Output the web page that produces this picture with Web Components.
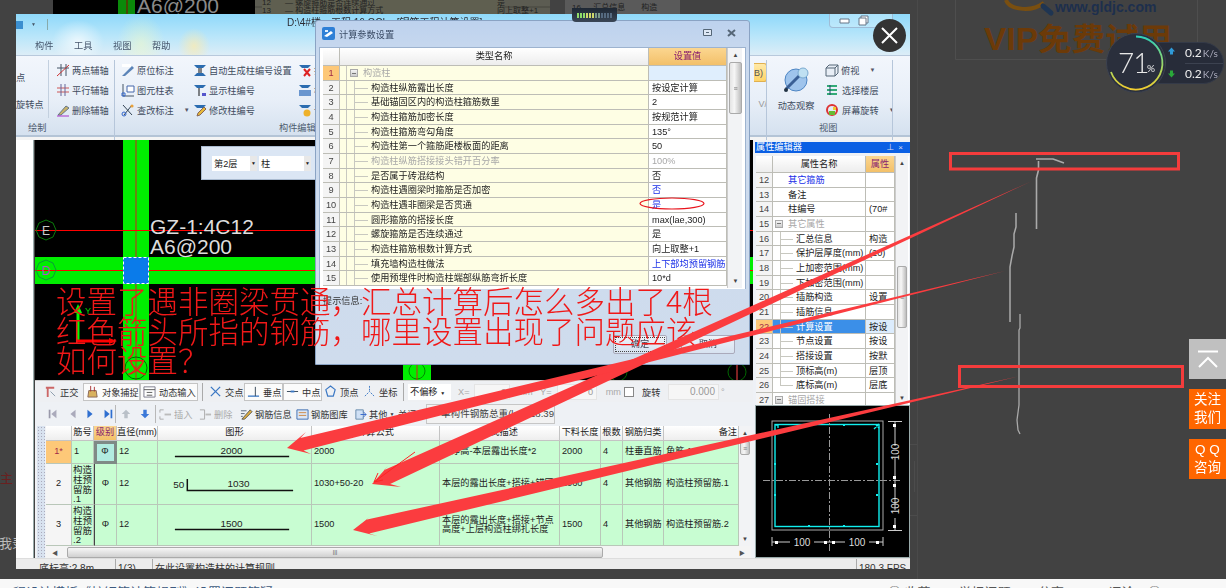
<!DOCTYPE html>
<html lang="zh"><head><meta charset="utf-8"><title>计算参数设置</title>
<style>html,body{margin:0;padding:0;background:#424242;overflow:hidden}</style></head>
<body><x-page></x-page>
<script>
const FONT='"Liberation Sans","Noto Sans CJK SC",sans-serif';
function def(name,css,html){
  customElements.define(name,class extends HTMLElement{
    connectedCallback(){
      if(this.shadowRoot)return;
      const r=this.attachShadow({mode:'open'});
      r.innerHTML='<style>'+css+'</style>'+(typeof html==='function'?html(this):html);
    }
  });
}
const I={
 twop:'<path d="M5 1v12M10 1v12M1 5h12" stroke="#456"/><path d="M1 13 13 2" stroke="#c33"/>',
 par:'<path d="M1 5h12M1 9h12" stroke="#c55"/><path d="M5 1v12M9 1v12" stroke="#669"/>',
 del:'<path d="M2 12 10 3l3 2-8 7z" fill="#c9b26a" stroke="#678"/><path d="M1 13h12" stroke="#a3c"/>',
 pen:'<path d="M1 13 11 3l2 2-9 8z" fill="#5b84b8"/><path d="M1 1h9v3H1z" fill="#fff"/>',
 tbl:'<path d="M2 1v12h11" stroke="#456"/><path d="M6 3h7v6H6z" fill="#fff" stroke="#46a"/><path d="M1 10h3v3H1z" stroke="#36c"/>',
 chk:'<path d="M2 2l9 10M11 2 3 12" stroke="#345"/><circle cx="3" cy="11" r="2" stroke="#36c"/><circle cx="11" cy="3" r="1.6" fill="#e9a13b"/>',
 auto:'<path d="M1 2h12l-3 3H4zM1 13h12l-3-3H4z" fill="#2b6cb0"/><path d="M6 5v5M8 5v5" stroke="#111"/>',
 show:'<path d="M1 2h12l-3 3H4z" fill="#2b6cb0"/><path d="M6 5v8" stroke="#111"/><path d="M9 10h4v3H9z" fill="#55c"/>',
 edit:'<path d="M1 2h12l-3 3H4z" fill="#2b6cb0"/><path d="M4 13l1-3 6-6 2 2-6 6z" fill="#e7b93a" stroke="#865"/>',
 x1:'<path d="M1 2h12l-3 3H4z" fill="#2b6cb0"/><path d="M6 6l6 7M12 6l-6 7" stroke="#d22" stroke-width="2"/>',
 x2:'<path d="M1 2h12l-3 3H4z" fill="#2b6cb0"/><path d="M1 7h12v6H1z" fill="#6a96cf"/>',
 x3:'<path d="M1 2h12l-3 3H4z" fill="#2b6cb0"/><circle cx="9" cy="10" r="3.5" fill="#eeb12a"/>',
 cube:'<path d="M1 5h9v8H1zM1 5l3-3h9l-3 3M13 2v8l-3 3" stroke="#567" fill="#e8eef6"/>',
 floor:'<path d="M2 3h10M2 7h10M2 11h10" stroke="#3a7" stroke-width="2"/><path d="M5 2v10" stroke="#246"/>',
 rot:'<circle cx="7" cy="7" r="5" stroke="#d33" stroke-width="2"/><path d="M4 8h6v4H4z" fill="#6b3"/><path d="M8 4h3v3H8z" fill="#ec3"/>',
 ortho:'<path d="M2 3h9M4 3v10" stroke="#c66" stroke-width="2"/><path d="M7 7l5 5" stroke="#89a"/>',
 snap:'<path d="M3 6h8l1 7H2z" fill="#d9b25e" stroke="#865"/><path d="M5 1v6M9 2v5" stroke="#a33"/>',
 dyn:'<path d="M1 2h12v11H1z" fill="#fff" stroke="#778"/><path d="M1 5h12M4 8h6M4 11h6" stroke="#555"/>',
 cross:'<path d="M2 2l10 10M12 2 2 12" stroke="#3b78c4" stroke-width="1.4"/>',
 perp:'<path d="M1 12h12" stroke="#3b78c4" stroke-width="1.4"/><path d="M9 2v10" stroke="#345"/>',
 mid:'<path d="M1 7h12" stroke="#345"/><path d="M5 6h4v2H5z" fill="#3b78c4"/>',
 apex:'<path d="M7 1l5 4-2 7H4L2 5z" stroke="#3b78c4" stroke-width="1.3"/>',
 coord:'<path d="M2 12 7 7l5 5M7 1v6" stroke="#3b78c4" stroke-dasharray="2 1"/>',
 first:'<path d="M3 2v10" stroke="#99a" stroke-width="2"/><path d="M11 2v10L5 7z" fill="#aab"/>',
 prev:'<path d="M10 2v10L4 7z" fill="#aab"/>',
 next:'<path d="M4 2v10l6-5z" fill="#2f6fd0"/>',
 last:'<path d="M3 2v10l6-5z" fill="#2f6fd0"/><path d="M11 2v10" stroke="#2f6fd0" stroke-width="2"/>',
 up:'<path d="M7 2l5 5H9v5H5V7H2z" fill="#b9c0c8"/>',
 down:'<path d="M7 12 2 7h3V2h4v5h3z" fill="#3b78d8"/>',
 ins:'<path d="M1 2h4M1 12h4M1 2v3M1 9v3" stroke="#aaa"/><path d="M6 6h7v2H6z" fill="#bbb"/>',
 dl:'<path d="M1 2h5M1 12h5M6 2v10" stroke="#aaa"/><path d="M7 6h6v2H7z" fill="#bbb"/>',
 info:'<path d="M2 12 11 2l2 2-8 8z" fill="#e0b040" stroke="#555"/><path d="M1 3h6M1 6h4M1 9h2" stroke="#567"/>',
 lib:'<path d="M1 2h12v10H1z" fill="#dbe6f5" stroke="#3b6cb0"/><path d="M3 5h8M3 8h8" stroke="#c84"/>',
 other:'<path d="M2 2h8v10H2z" fill="#cfe0f5" stroke="#68a"/><path d="M7 7h6M10 4l3 3-3 3" stroke="#36c"/>'
};
const ic=(k,s=14)=>`<svg width="${s}" height="${s}" viewBox="0 0 14 14" fill="none" style="flex:none;display:block">${I[k]}</svg>`;

/* ---------- ribbon ---------- */
def('rb-item',`:host{display:flex;align-items:center;gap:1px;height:20px;white-space:nowrap;font-size:9.2px;color:#3f4c5e}
  i{font-style:normal;font-size:6px;color:#556;margin-left:9px}`,
  t=>ic(t.getAttribute('icon'))+`<span style="margin-left:${t.getAttribute('gap')||1}px">${t.getAttribute('text')||''}</span>`+(t.hasAttribute('drop')?'<i>▼</i>':''));
def('rb-col',`:host{display:flex;flex-direction:column;flex:none}`,'<slot></slot>');
def('rb-group',`:host{display:flex;flex-direction:column;flex:none;box-sizing:border-box;height:80px;border-right:1px solid #b6c6da;overflow:hidden}
  .b{display:flex;height:60px;flex:none}
  .l{flex:none;height:17px;line-height:16px;font-size:9.2px;color:#4d5b6e;white-space:nowrap}`,
  t=>`<div class="b"><slot></slot></div><div class="l" style="padding-left:${t.getAttribute('lx')||0}px">${t.getAttribute('label')}</div>`);
def('x-ribbon',`:host{display:block;flex:none;height:126px;font-family:${FONT}}
  .head{height:41px;box-sizing:border-box;position:relative;overflow:hidden;
    background:radial-gradient(26px 22px at 62px 28px,rgba(255,255,255,.7),transparent),radial-gradient(24px 30px at 125px 30px,rgba(240,250,200,.55),transparent),radial-gradient(16px 18px at 178px 32px,rgba(255,235,170,.7),transparent),linear-gradient(180deg,#8fd9fa 0,#b9e6fa 55%,#dcedf7 100%)}
  .qa{display:flex;align-items:center;height:20px;gap:5px;padding-left:0}
  .tabs{display:flex;position:absolute;left:19px;top:24px;font-size:9.2px;color:#46566c;gap:20px;line-height:16px}
  .tabs span{width:19px;white-space:nowrap}
  .title{position:absolute;left:271px;top:2px;font-size:10px;line-height:14px;color:#2b2b33;white-space:nowrap}
  .ctl{position:absolute;left:813px;top:0;width:64px;height:14px;border:1px solid #9fbcd6;border-top:0;border-radius:0 0 4px 4px;display:flex;align-items:center;gap:8px;padding-left:9px;box-sizing:border-box;background:rgba(255,255,255,.25)}
  .body{display:flex;height:82px;box-sizing:border-box;border-top:1px solid #b8c9dc;border-bottom:2px solid #b4c4d6;background:linear-gradient(180deg,#f2f6fc 0,#e8eff8 55%,#d5e1ef 100%);padding-top:4px}
  .sep{width:1px;background:#c3d0df;height:58px;margin:0 7px 0 4px;flex:none}
  .gap{height:3px;background:#f4f4f4}
  .orange{width:13px;height:19px;margin-top:3px;background:linear-gradient(#ffe9a8,#ffd467);border:1px solid #e0b050;border-left:0;border-radius:0 3px 3px 0;font-size:9px;color:#555;line-height:19px;box-sizing:border-box;white-space:nowrap}`,
  `<div class="head">
     <div class="qa"><svg width="8" height="14" viewBox="0 0 8 14"><path d="M0 4h7v8H0z" fill="#3b8fd0"/></svg><span style="font-size:5px;color:#456;margin-left:2px">▼</span><span style="width:1px;height:11px;background:#8aa;margin-left:6px"></span></div>
     <div class="tabs"><span>构件</span><span>工具</span><span>视图</span><span>帮助</span></div>
     <div class="title">D:\\4#楼一工程 16.GCL - [钢筋工程计算设置]</div>
     <div class="ctl"><svg width="11" height="6"><path d="M1 1h9v4H1z" fill="#fff" stroke="#678"/></svg><svg width="11" height="11"><path d="M1 3h7v7H1zM3 3V1h7v7H8" fill="#fff" stroke="#678"/></svg></div>
   </div>
   <div class="body">
     <rb-group label="绘制" lx="12" style="width:99px">
       <rb-col style="width:28px;font-size:9.2px;color:#3f4c5e;line-height:14px;padding-top:11px;white-space:nowrap;overflow:hidden"><div>点</div><div style="margin-top:13px">旋转点</div></rb-col>
       <span class="sep"></span>
       <rb-col><rb-item icon="twop" text="两点辅轴"></rb-item><rb-item icon="par" text="平行辅轴"></rb-item><rb-item icon="del" text="删除辅轴"></rb-item></rb-col>
     </rb-group>
     <rb-group label="构件编辑" lx="164" style="width:652px">
       <rb-col style="width:72px;margin-left:6px"><rb-item icon="pen" text="原位标注"></rb-item><rb-item icon="tbl" text="图元柱表"></rb-item><rb-item icon="chk" text="查改标注" drop></rb-item></rb-col>
       <rb-col style="width:105px"><rb-item icon="auto" text="自动生成柱编号设置"></rb-item><rb-item icon="show" text="显示柱编号"></rb-item><rb-item icon="edit" text="修改柱编号"></rb-item></rb-col>
       <rb-col style="width:200px"><rb-item icon="x1" text="批量修改"></rb-item><rb-item icon="x2" text="柱表定义"></rb-item><rb-item icon="x3" text="调整方向"></rb-item></rb-col>
       <rb-col style="flex:1"></rb-col>
       <rb-col style="width:17px;align-items:flex-end;font-size:9px;color:#999;margin-right:-1px"><div class="orange">B)</div><div style="margin-top:17px">V/</div></rb-col>
     </rb-group>
     <rb-group label="视图" lx="52" style="width:126px">
       <rb-col style="width:58px;align-items:center;font-size:9.2px;color:#3f4c5e">
         <svg width="28" height="28" viewBox="0 0 28 28" style="margin-top:7px"><circle cx="14" cy="13" r="11" fill="#9fc4ec" stroke="#4e86c4"/><path d="M4 22 20 6" stroke="#3a5f95" stroke-width="3"/><circle cx="21" cy="6" r="5" fill="#bfe0f2" stroke="#7aaad0"/><circle cx="4" cy="23" r="2" fill="#234"/></svg>
         <div style="margin-top:3px;white-space:nowrap">动态观察</div></rb-col>
       <rb-col><rb-item icon="cube" text="俯视" drop></rb-item><rb-item icon="floor" text="选择楼层" gap="2"></rb-item><rb-item icon="rot" text="屏幕旋转" gap="2" drop></rb-item></rb-col>
     </rb-group>
   </div><div class="gap"></div>`);

/* ---------- scroll bars ---------- */
def('x-vscroll',`:host{display:flex;flex-direction:column;flex:none;box-sizing:border-box;background:#f2f3f5;align-items:center;font-size:6px;color:#444}
  .a{height:14px;line-height:14px;flex:none}.s{flex:1;width:100%;position:relative}
  .t{margin:0 1px;box-sizing:border-box;background:linear-gradient(90deg,#e4e4e4,#f6f6f6 40%,#bdbdbd);border:1px solid #aaa;border-radius:2px;display:flex;align-items:center;justify-content:center;color:#777;font-size:7px}`,
  t=>`<div class="a">▲</div><div class="s"><div class="t" style="margin-top:${t.getAttribute('top')||0}px;height:${t.getAttribute('len')||40}px">≡</div></div><div class="a">▼</div>`);

/* ---------- tree grid used by the dialog and the property panel ---------- */
def('tree-grid',`:host{display:flex;font-family:${FONT};font-size:9.2px;color:#222;background:#fff;overflow:hidden}
  .g{display:grid;flex:none;grid-auto-rows:14.667px;align-content:start}
  .c{box-sizing:border-box;border-right:1px solid #bdbdb6;border-bottom:1px solid #bdbdb6;overflow:hidden;white-space:nowrap;line-height:14px;position:relative}
  .h{background:linear-gradient(#fff,#ededed);text-align:center;line-height:17px;height:100%;color:#222}
  .hv{background:linear-gradient(#fbd690,#f3c069);color:#8a1f6e}
  .n{background:#f4f4f4;text-align:center;color:#444}
  .no{background:#fdc878;color:#a02b48}
  .v{padding-left:3px;background:#fff}
  .blue{color:#1a2fe8}.gray{color:#a8a8a8}
  .vl{position:absolute;top:0;bottom:0;width:0;border-left:1px solid #c8c8c0}
  .hl{position:absolute;top:7px;height:0;border-top:1px solid #c8c8c0}
  .box{position:absolute;top:3px;width:8px;height:8px;box-sizing:border-box;border:1px solid #aaa;background:linear-gradient(#f4f4f4,#ccc)}
  .box:after{content:"";position:absolute;left:1px;right:1px;top:2.5px;border-top:1px solid #777}
  .sel{background:#3b8fe8!important;color:#fff}.sv{background:#dcecfd}
  .t{position:absolute;white-space:nowrap}`,
  t=>{const o=JSON.parse(t.getAttribute('cfg'));
    let h=`<div class="c h" style="grid-row:span 1"></div><div class="c h">${o.name}</div><div class="c h hv">${o.val}</div>`;
    o.rows.forEach(r=>{const[num,txt,val,kind='',vk='']=r;const grp=kind==='g',top=kind==='t',sel=kind==='s';
      let inner=(o.col2||'');
      if(grp)inner+=`<div class="box" style="left:${o.box}px"></div><span class="t gray" style="left:${o.gt}px">${txt}</span>`;
      else if(top)inner+=`<span class="t ${vk==='ln'?'blue':''}" style="left:${o.gt}px">${txt}</span>`;
      else inner+=`<div class="vl" style="left:${o.vl}px;${r[5]?'bottom:7px':''}"></div><div class="hl" style="left:${o.vl}px;width:${o.ct-o.vl-3}px"></div><span class="t ${kind==='x'?'gray':''}" style="left:${o.ct}px">${txt}</span>`;
      h+=`<div class="c n ${sel||r[6]?'no':''}">${num}</div><div class="c ${sel?'sel':''}" style="background:${sel?'':o.bg}">${inner}</div><div class="c v ${vk==='b'?'blue':''} ${kind==='x'?'gray':''} ${sel?'sv':''}" style="${r[6]?'background:#dfeefd':''}">${val}</div>`;});
    return `<div class="g" style="grid-template-columns:${o.cols};grid-template-rows:${o.hh}px">${h}</div><x-vscroll top="${o.st}" len="${o.sl}" style="width:${o.sw}px;border-left:1px solid #ccc"></x-vscroll>`;});

const dlgCfg={name:'类型名称',val:'设置值',cols:'17px 309px 78px',hh:18,bg:'#fefee4',box:10,gt:23,vl:14,ct:31,sw:16,st:0,sl:52,
 col2:'<div class="vl" style="left:6px"></div>',
 rows:[['1','构造柱','','g','',0,1],['2','构造柱纵筋露出长度','按设定计算'],['3','基础锚固区内的构造柱箍筋数里','2'],['4','构造柱箍筋加密长度','按规范计算'],['5','构造柱箍筋弯勾角度','135°'],['6','构造柱第一个箍筋距楼板面的距离','50'],['7','构造柱纵筋搭接接头错开百分率','100%','x'],['8','是否属于砖混结构','否'],['9','构造柱遇圈梁时箍筋是否加密','否','','b'],['10','构造柱遇非圈梁是否贯通','是','','b'],['11','圆形箍筋的搭接长度','max(lae,300)'],['12','螺旋箍筋是否连续通过','是'],['13','构造柱箍筋根数计算方式','向上取整+1'],['14','填充墙构造柱做法','上下部均预留钢筋','','b'],['15','使用预埋件时构造柱端部纵筋弯折长度','10*d']]};
const panCfg={name:'属性名称',val:'属性',cols:'17px 93px 29px',hh:17,bg:'#fff',box:2,gt:15,vl:7,ct:23,sw:13,st:96,sl:62,
 rows:[['12','其它箍筋','','t','ln'],['13','备注','','t'],['14','柱编号','(70#','t'],['15','其它属性','','g'],['16','汇总信息','构造'],['17','保护层厚度(mm)','(20)'],['18','上加密范围(mm)',''],['19','下加密范围(mm)',''],['20','插筋构造','设置'],['21','插筋信息',''],['22','计算设置','按设','s'],['23','节点设置','按设'],['24','搭接设置','按默'],['25','顶标高(m)','层顶'],['26','底标高(m)','层底','','',1],['27','锚固搭接','','g']]};

/* ---------- dialog ---------- */
def('x-dialog',`:host{position:absolute;left:299px;top:6px;width:435px;height:345px;box-sizing:border-box;display:flex;flex-direction:column;background:linear-gradient(#bdd2ee,#cbdaee 12%,#cfdced);border:1px solid #8aa3c4;border-radius:3px 3px 0 0;font-family:${FONT}}
  .tb{height:25px;flex:none;display:flex;align-items:center;padding-left:6px;gap:4px;font-size:9.2px;color:#3b4c66;position:relative}
  .ctl{position:absolute;top:8px}
  .fr{margin:1px 3px 0;padding:0 3px;background:#fff;border:1px solid #9db3cf;flex:none;height:241px;border-bottom:0}
  tree-grid{height:240px}
  .ft{flex:1;position:relative;padding:5px 7px;font-size:9.2px;color:#333;line-height:14px}
  .btns{position:absolute;right:14px;bottom:10px;display:flex;gap:14px}
  .b{width:54px;height:19px;text-align:center;line-height:17px;box-sizing:border-box;border:1px solid #aab;border-radius:2px;background:linear-gradient(#eef3fa,#d7e2f0);color:#445}
  .d{outline:1px dotted #444;outline-offset:-3px}`,
  `<div class="tb"><svg width="13" height="13" viewBox="0 0 13 13"><rect width="13" height="13" rx="2" fill="#2e7fd6"/><path d="M2 9 9 4l2 2-6 4z" fill="#fff"/><path d="M3 3h3v2H3z" fill="#dfeeff"/></svg><span>计算参数设置</span>
     <svg class="ctl" style="left:387px" width="10" height="8"><path d="M.5.5h8v6h-8z" fill="#dde7f4" stroke="#567"/><path d="M3 3h3v1H3z" fill="#567"/></svg>
     <svg class="ctl" style="left:411px" width="10" height="8"><path d="M1 1l7 6M8 1 1 7" stroke="#567" stroke-width="2"/></svg></div>
   <div class="fr"><tree-grid cfg='${JSON.stringify(dlgCfg).replace(/'/g,"&#39;")}'></tree-grid></div>
   <div class="ft">提示信息:<div class="btns"><div class="b d">确定</div><div class="b">取消</div></div></div>`);

/* ---------- canvas ---------- */
def('x-canvas',`:host{display:block;flex:none;height:240px;position:relative;background:#000;overflow:hidden;font-family:${FONT}}
  svg{display:block}
  .lay{position:absolute;left:166px;top:6px;width:150px;height:34px;box-sizing:border-box;background:#dbe6f4;border:1px solid #aabbd0;display:flex;align-items:center;gap:2px;padding-left:10px;font-size:9.2px;color:#222}
  .sel{height:15px;background:#fff;display:flex;align-items:center;padding-left:2px;box-sizing:border-box;justify-content:space-between;white-space:nowrap}
  .sel i{font-style:normal;font-size:5px;background:#e8e8e8;height:15px;width:7px;line-height:15px;text-align:center}`,
  `<svg width="718" height="240" viewBox="34 140 718 240">
     <rect x="122" y="140" width="26" height="240" fill="#0e0"/><rect x="34" y="257" width="718" height="27" fill="#0e0"/>
     <path d="M135 140v240" stroke="#d02020"/><path d="M34 230.5h718M34 270.5h718" stroke="#f00"/>
     <rect x="122" y="257" width="26" height="27" fill="#0a7bea"/><rect x="122.5" y="257.5" width="25" height="26" fill="none" stroke="#fff" stroke-dasharray="3 2"/>
     <path d="M45 220l7 3 3 7-3 7-7 3-7-3-3-7 3-7z" fill="none" stroke="#0a7a0a"/><path d="M45 260l7 3 3 7-3 7-7 3-7-3-3-7 3-7z" fill="none" stroke="#0a9a3a"/>
     <text x="45" y="234.5" text-anchor="middle" font-size="12" fill="#ccc">E</text><text x="45" y="274.5" text-anchor="middle" font-size="12" fill="#b050d0">D</text>
     <text x="149" y="234" font-size="21" fill="#ddd">GZ-1:4C12</text><text x="149" y="254" font-size="21" fill="#ddd">A6@200</text>
     <path d="M77 342v-32" stroke="#0f0" stroke-width="3"/><path d="M77 304l-4 9h8z" fill="#0f0"/><text x="84" y="314" font-size="9" fill="#0c0">Y</text>
     <path d="M75 341h36" stroke="#f00" stroke-width="3"/><path d="M116 341l-8-3v6z" fill="#f00"/>
     <circle cx="135" cy="368" r="11" fill="none" stroke="#060"/><path d="M130 364l10 9M140 364l-10 9" stroke="#d03030"/>
     <rect x="402" y="363" width="28" height="17" fill="#0e0"/><circle cx="416" cy="371" r="8" fill="none" stroke="#080"/><path d="M416 363v17" stroke="#d02020"/>
     <circle cx="617" cy="372" r="9" fill="none" stroke="#060"/><circle cx="736" cy="372" r="9" fill="none" stroke="#060"/><path d="M736 363v17" stroke="#f44"/>
   </svg>
   <div class="lay"><div class="sel" style="width:45px">第2层<i>▼</i></div><div class="sel" style="width:52px">柱<i>▼</i></div></div>`);

/* ---------- snap toolbar ---------- */
def('t-btn',`:host{display:flex;align-items:center;gap:3px;height:18px;box-sizing:border-box;font-size:9.2px;color:#333;white-space:nowrap;flex:none;padding-left:2px}
  :host([on]){background:#fbfbfb;border:1px solid #c4c4c4}`,t=>ic(t.getAttribute('icon'),13)+`<span>${t.getAttribute('text')}</span>`);
def('x-snapbar',`:host{display:flex;flex:none;height:22px;align-items:center;background:#eef0f3;border-top:1px solid #ccc;box-sizing:border-box;padding-left:7px;font-family:${FONT};font-size:9.2px;color:#aaa;overflow:hidden;white-space:nowrap}
  .sp{width:1px;height:18px;background:#aaa;margin:0 3px;flex:none}
  .i{background:#f6f6f6;height:16px;flex:none;border:1px solid #e4e4e4;box-sizing:border-box;text-align:right;line-height:14px;padding-right:3px;color:#999}`,
  `<t-btn icon="ortho" text="正交" style="width:41px"></t-btn><t-btn on icon="snap" text="对象捕捉" style="width:57px"></t-btn><t-btn on icon="dyn" text="动态输入" style="width:58px"></t-btn>
   <span class="sp" style="margin:0 4px"></span><t-btn icon="cross" text="交点" style="width:37px"></t-btn><t-btn on icon="perp" text="垂点" style="width:39px"></t-btn><t-btn on icon="mid" text="中点" style="width:39px"></t-btn><t-btn icon="apex" text="顶点" style="width:39px"></t-btn><t-btn icon="coord" text="坐标" style="width:38px"></t-btn>
   <span class="sp" style="margin:0 4px"></span>
   <div style="width:43px;flex:none;background:#fff;height:16px;line-height:16px;color:#222;padding-left:2px;box-sizing:border-box">不偏移 <span style="font-size:5px">▼</span></div>
   <span style="margin-left:7px;width:16px;flex:none">X=</span><div class="i" style="width:36px">0</div><span style="width:30px;flex:none;text-align:center">mm</span><span style="width:17px;flex:none">Y=</span><div class="i" style="width:40px">0</div>
   <span style="width:24px;flex:none;text-align:right">mm</span><span style="width:8px;height:8px;border:1px solid #888;background:#fff;margin-left:3px;flex:none"></span><span style="margin-left:8px;color:#333;width:26px;flex:none">旋转</span><div class="i" style="width:51px;font-size:10px">0.000</div><span style="margin-left:2px">°</span>`);

/* ---------- rebar grid ---------- */
def('x-rebar',`:host{display:flex;flex-direction:column;flex:1;min-height:0;position:relative;font-family:${FONT};font-size:9.2px;color:#222;background:#f0f2f5}
  .tb{height:24px;flex:none;display:flex;align-items:center;padding-left:12px;white-space:nowrap;color:#aaa;background:#eef1f5}
  .tb span{display:flex;align-items:center;gap:2px;flex:none}
  .s{width:1px;height:18px;background:#b8b8b8;flex:none}
  .d{color:#333}
  .w{background:#f2f2f2;border:1px solid #c6c6c6;width:129px;height:20px;line-height:18px;padding-left:14px;color:#444;box-sizing:border-box;font-size:9.600px;margin-left:4px;flex:none;overflow:hidden}
  .m{display:flex;flex:1;min-height:0}
  .st{width:8px;flex:none;margin:0 1px 0 2px;background:radial-gradient(#aab 0.7px,transparent 1px) 0 0/3px 3px,#d8e2ef}
  .g{display:grid;grid-template-columns:26px 22px 23px 41px 154px 128px 120px 41px 22px 41px 75px;grid-template-rows:15px 23px 41px 41px;flex:none}
  .c{box-sizing:border-box;border-right:1px solid #b9c7b9;border-bottom:1px solid #b9c7b9;background:#c8fdd2;overflow:hidden;display:flex;align-items:center;padding-left:2px;position:relative;line-height:9.5px}
  .h{background:linear-gradient(#fff,#eee);padding:0;justify-content:center;border-color:#c4c4c4;white-space:nowrap}
  .n{background:#f5f5f5;justify-content:center;padding:0}
  .o{background:#fdc878;color:#a02b48}
  .ho{background:linear-gradient(#fbd690,#f3c069);color:#8a1f6e}
  .sel{background:#b2ece0;outline:3px solid #7f8a86;outline-offset:-3px;justify-content:center;padding:0}
  .ctr{justify-content:center;padding:0}
  .fig{padding:0}
  .fig svg{display:block}
  .hs{height:12px;flex:none;display:flex;align-items:center;background:#f4f4f4;font-size:6px;color:#555;padding-left:6px}
  .hs .th{height:11px;width:536px;box-sizing:border-box;border:1px solid #aaa;border-radius:2px;margin-left:9px;background:linear-gradient(#f6f6f6,#d0d0d0);text-align:center;line-height:9px}
  .wrap{display:block;padding:1px 0 0 1px;font-size:9.5px;line-height:9.8px;white-space:nowrap}`,
  ()=>{const hd=['','筋号','级别','直径(mm)','图形','计算公式','公式描述','下料长度','根数','钢筋归类','备注'];
    const fig=(w,p)=>`<svg width="154" height="${w}" viewBox="0 0 154 ${w}">${p}</svg>`;
    const T=(x,y,s)=>`<text x="${x}" y="${y}" text-anchor="middle" font-size="10" fill="#222" font-family="Liberation Sans">${s}</text>`;
    const row=(n,a,dia,f,calc,desc,len,cnt,cat,note,first)=>`<div class="c n ${first?'o':''}">${n}</div><div class="c ${a.length>2?'wrap':''}">${a}</div>${first?'<div class="c sel">Φ</div>':'<div class="c ctr" style="border-left:1px solid #444">Φ</div>'}<div class="c">12</div><div class="c fig">${f}</div><div class="c">${calc}</div><div class="c" style="line-height:9.4px">${desc}</div><div class="c">${len}</div><div class="c">${cnt}</div><div class="c">${cat}</div><div class="c" style="white-space:nowrap">${note}</div>`;
    return `<div class="tb"><span style="width:20px">${ic('first',12)}</span><span style="width:17px">${ic('prev',12)}</span><span style="width:18px">${ic('next',12)}</span><span style="width:13px">${ic('last',12)}</span><i class="s"></i>
      <span style="width:19px;margin-left:4px">${ic('up',12)}</span><span style="width:16px">${ic('down',12)}</span><i class="s"></i>
      <span style="width:40px;margin-left:3px">${ic('ins',13)}插入</span><span style="width:41px">${ic('dl',13)}删除</span>
      <span class="d" style="width:56px">${ic('info',13)}钢筋信息</span><span class="d" style="width:58px">${ic('lib',13)}钢筋图库</span><span class="d" style="width:44px">${ic('other',13)}其他 <b style="font-size:5px">▼</b></span><span class="d" style="width:24px">关闭</span><div class="w">单构件钢筋总重(kg): 18.39</div></div>
     <div class="m"><div class="st"></div><div style="display:flex;flex-direction:column;flex:none">
       <div style="display:flex"><div class="g">
        ${hd.map((h,i)=>`<div class="c h ${i==2?'ho':''}" ${i==10?'style="justify-content:flex-end;padding-right:1px"':''}>${h}</div>`).join('')}
        ${row('1*','1','',fig(23,`<path d="M17 15.5h115" stroke="#111" stroke-width="1.5"/>`+T(74,13,'2000')),'2000','层净高-本层露出长度*2','2000','4','柱垂直筋','角筋.1',1)}
        ${row('2','构造<br>柱预<br>留筋<br>.1','',fig(41,`<path d="M29.5 15v11.5H136" fill="none" stroke="#111" stroke-width="1.5"/>`+T(21,24,'50')+T(81,23,'1030')),'1030+50-20','本层的露出长度+搭接+锚固','1060','4','其他钢筋','构造柱预留筋.1')}
        ${row('3','构造<br>柱预<br>留筋<br>.2','',fig(41,`<path d="M17 24.5h115" stroke="#111" stroke-width="1.5"/>`+T(74,22,'1500')),'1500','本层的露出长度+搭接+节点高度+上层构造柱绑扎长度','1500','4','其他钢筋','构造柱预留筋.2')}
       </div><x-vscroll top="1" len="14" style="width:12px;height:120px"></x-vscroll></div>
       <div class="hs"><span>◀</span><div class="th">|||</div><span style="margin-left:auto;margin-right:6px">▶</span></div>
     </div></div>`;});

/* ---------- property panel with section ---------- */
def('x-section',`:host{display:block;flex:1;background:#000;border:1px solid #9aa;box-sizing:border-box;margin-left:2px;margin-right:1px;font-family:${FONT};overflow:hidden}svg{display:block}`,
  `<svg width="155" height="153" viewBox="755 405 155 153">
    <rect x="771" y="420" width="111" height="109" fill="none" stroke="#aaa"/>
    <rect x="774" y="423.5" width="104" height="102" fill="none" stroke="#1ee" stroke-width="1.4"/>
    <path d="M828.5 413v137M762 479.5h137" stroke="#999" stroke-dasharray="7 2 2 2"/>
    <path d="M774 424h3v3M875 424l3 3M873 428l5-5" stroke="#1ee" stroke-width="1.3"/>
    <g fill="#1ee"><rect x="773" y="462" width="2" height="2"/><rect x="773" y="493" width="2" height="2"/><rect x="875" y="462" width="2" height="2"/><rect x="875" y="493" width="2" height="2"/><rect x="807" y="423" width="2" height="2"/><rect x="842" y="423" width="2" height="2"/><rect x="807" y="524" width="2" height="2"/><rect x="842" y="524" width="2" height="2"/></g>
    <path d="M887 420.5h14M887 529.5h14M894 420v25M894 457v52M894 517v12" stroke="#ccc"/>
    <path d="M771 541h18M813 541h31M868 541h14M771 536v9M882 536v9" stroke="#ccc"/>
    <g fill="#fff"><rect x="892" y="423" width="3" height="3"/><rect x="892" y="475" width="3" height="3"/><rect x="892" y="483" width="3" height="3"/><rect x="892" y="524" width="3" height="3"/><rect x="774" y="540" width="3" height="3"/><rect x="823" y="540" width="3" height="3"/><rect x="831" y="540" width="3" height="3"/><rect x="875" y="540" width="3" height="3"/></g>
    <g font-size="10" fill="#ddd" text-anchor="middle"><text x="801" y="545">100</text><text x="856" y="545">100</text>
    <text transform="translate(897.500 451) rotate(-90)">100</text><text transform="translate(897.500 505) rotate(-90)">100</text></g></svg>`);
def('x-panel',`:host{display:flex;flex-direction:column;flex:none;width:158px;background:#eef1f6;font-family:${FONT}}
  .t{flex:none;height:11px;margin:2px 1px 0 2px;background:#0a5fe4;color:#fff;font-size:9.2px;line-height:11px;padding-left:1px;display:flex;justify-content:space-between;white-space:nowrap;overflow:hidden}
  .t i{font-style:normal;font-size:8px;color:#dde;margin-right:3px;letter-spacing:4px}
  tree-grid{height:249px;flex:none;margin:3px 2px 0 3px}`,
  `<div class="t"><span>属性编辑器</span><i>⊥×</i></div><tree-grid cfg='${JSON.stringify(panCfg)}'></tree-grid><x-section></x-section>`);

/* ---------- status ---------- */
def('x-status',`:host{display:flex;flex:none;height:11px;background:#ececec;font-family:${FONT};font-size:10px;line-height:13px;color:#333;overflow:hidden;padding-left:21px;white-space:nowrap;border-top:1px solid #ddd;box-sizing:border-box}
  span{border-left:1px solid #aaa;padding:3px 0 0 2px;flex:none;height:20px}`,
  `<span style="width:76px;border-left:0">底标高:2.8m</span><span style="width:34px">1(3)</span><span style="width:664px">在此设置构造柱的计算规则</span><span style="margin-left:auto;width:51px">180.3 FPS</span>`);

/* ---------- window ---------- */
def('x-window',`:host{position:absolute;left:16px;top:14px;width:894px;height:555px;display:flex;flex-direction:column;overflow:hidden;filter:blur(.3px)}
  .main{display:flex;flex:1;min-height:0}
  .strip{width:17px;flex:none;background:#fff;border-right:1px solid #9aa}
  .left{display:flex;flex-direction:column;width:718px;flex:none;background:#f0f2f5;margin-left:1px}`,
  `<x-ribbon></x-ribbon><div class="main"><div class="strip"></div><div class="left"><x-canvas></x-canvas><x-snapbar></x-snapbar><x-rebar></x-rebar></div><x-panel></x-panel></div><x-status></x-status><x-dialog></x-dialog>`);

/* ---------- dim page behind the popup ---------- */
def('x-backdrop',`:host{display:block;position:absolute;inset:0;background:#424242;overflow:hidden;font-family:${FONT}}
  svg{position:absolute;left:0;top:0}`,
  `<svg width="1226" height="588" viewBox="0 0 1226 588" font-family='"Liberation Sans","Noto Sans CJK SC",sans-serif'>
    <rect x="53" y="0" width="202" height="14" fill="#000"/><rect x="118" y="0" width="17" height="14" fill="#0a8a0a"/><path d="M127 0v14" stroke="#800"/>
    <text x="137" y="13" font-size="21" fill="#8a8a8a">A6@200</text>
    <rect x="255" y="0" width="295" height="14" fill="#5c5c52"/><path d="M255 7h295M285 0v14M495 0v14" stroke="#44443c"/>
    <rect x="262" y="0" width="240" height="14" fill="#5f5f50"/>
    <text x="262" y="5" font-size="8" fill="#222">12</text><text x="262" y="13" font-size="8" fill="#222">13</text><text x="285" y="5" font-size="8" fill="#222">— 螺旋箍筋是否连续通过</text><text x="285" y="13" font-size="8" fill="#222">— 构造柱箍筋根数计算方式</text><text x="497" y="5" font-size="8" fill="#222">是</text><text x="497" y="13" font-size="8" fill="#222">向上取整+1</text>
    <rect x="565" y="0" width="115" height="14" fill="#5a5a5a"/><text x="572" y="10" font-size="8" fill="#222">16 — 汇总信息　　构造</text>
    <path d="M955.5 0v59.5h242V0" fill="none" stroke="#4e4e4e"/>
    <path d="M1006 0c3 9 24 13 38 3" fill="none" stroke="#7a4f10" stroke-width="4"/><path d="M1043 6l8 7" stroke="#1f3552" stroke-width="5" stroke-linecap="round"/>
    <text x="1055" y="12" font-size="14" font-weight="700" fill="#1d2f4d">www.gldjc.com</text>
    <text x="984" y="50" font-size="31" font-weight="700" fill="#6c3a08" textLength="188" lengthAdjust="spacingAndGlyphs">VIP免费试用</text>
    <path d="M917.5 0v579" stroke="#4a4a4a"/><path d="M910 444.5h7M910 515.5h7M914.5 461v31" stroke="#4c4c4c"/>
    <text x="0" y="483" font-size="13" fill="#6a2020">主</text><text x="-1" y="548" font-size="13" fill="#bbb">我录</text>
    <g fill="none" stroke-linejoin="round"><path d="M1036 159h17l11 4" stroke="#aaa" stroke-width="1.5"/><path d="M1038.5 161v9l-2 8v51" stroke="#aaa" stroke-width="1.6"/>
    <path d="M1016 213v14l-2 7v13l-2 9-2 11v55" stroke="#aaa" stroke-width="1.5"/><path d="M1020 314v14l-1 2v75l-2 15 1 10 2 4" stroke="#aaa" stroke-width="1.3"/></g>
    <rect x="950.5" y="153.5" width="228" height="15.500" fill="none" stroke="#f43c3c" stroke-width="3"/>
    <rect x="959.500" y="366.500" width="223" height="20" fill="none" stroke="#f43c3c" stroke-width="3"/>
  </svg>`);

/* ---------- annotations drawn over the window ---------- */
function arrow(t,tip,w1,w2,wd){const dx=tip[0]-t[0],dy=tip[1]-t[1],L=Math.hypot(dx,dy),ux=dx/L,uy=dy/L,px=-uy,py=ux;
  const back=((tip[0]-(w1[0]+w2[0])/2)*ux+(tip[1]-(w1[1]+w2[1])/2)*uy)*.7;
  const sx=tip[0]-ux*back,sy=tip[1]-uy*back,h=wd/2;
  return `<polygon points="${t} ${sx+px*h},${sy+py*h} ${w1} ${tip} ${w2} ${sx-px*h},${sy-py*h}" fill="#fb3c3f"/>`;}
def('x-annot',`:host{position:absolute;inset:0;pointer-events:none;font-family:"Noto Sans CJK SC",sans-serif}
  svg{position:absolute;left:0;top:0}
  .q{position:absolute;left:56px;top:286px;font-size:30.5px;line-height:29.500px;font-weight:300;color:#f01818;white-space:pre}`,
  `<div class="q">设置了遇非圈梁贯通&#xFF0C;汇总计算后怎么多出了4根
红色箭头所指的钢筋&#xFF0C;哪里设置出现了问题应该
如何设置&#xFF1F;</div>
   <svg width="1226" height="588" viewBox="0 0 1226 588">
     <ellipse cx="672" cy="203.500" rx="32" ry="5.500" fill="none" stroke="#e8141c" stroke-width="1.2"/>
     ${arrow([1032,181],[372,484],[388,466],[401,487],15)}
     ${arrow([1005,271],[287,448],[306,432],[311,454],13)}
     ${arrow([1020,376],[353,530],[371,516],[377,536],14)}
     <path d="M415 452 374 482M374 482l4-9M374 482l9-2" stroke="#f22" fill="none"/>
   </svg>`);

/* ---------- floating bits ---------- */
def('x-close',`:host{position:absolute;left:873px;top:19px;width:33px;height:33px;border-radius:50%;background:#333;display:flex;align-items:center;justify-content:center}`,
  `<svg width="17" height="17"><path d="M1 1l15 15M16 1 1 16" stroke="#fff" stroke-width="2"/></svg>`);
def('x-led',`:host{position:absolute;left:572px;top:8px;width:45px;height:14px;box-sizing:border-box;background:linear-gradient(#1e2733,#3a4656);border-radius:0 0 4px 4px;display:flex;align-items:center;gap:1px;padding:0 5px}
  i{width:2px;height:5px;flex:none}`,
  ()=>Array.from({length:12},(_,k)=>`<i style="background:${k<3?'#8fdc6a':k<6?'#cfd86a':k<8?'#7a9a8a':'#556a80'}"></i>`).join(''));
def('x-meter',`:host{position:absolute;left:1106px;top:33px;width:120px;height:60px;font-family:Lato,"Liberation Sans",sans-serif}
  .pill{position:absolute;left:44px;top:9px;width:74px;height:42px;box-sizing:border-box;border-radius:0 21px 21px 0;background:#272c39;border:1px solid #343a48;padding-left:34px;color:#eee;font-size:12px}
  .pill div{height:20px;line-height:20px;white-space:nowrap}.pill small{color:#aab;font-size:10px;margin-left:1px}
  .pill div:first-child{border-bottom:1px solid #3c4250}
  .c{position:absolute;left:0;top:0;width:60px;height:60px}
  .n{position:absolute;left:12px;top:14px;font-size:28px;line-height:30px;font-weight:300;color:#e8e8e8;letter-spacing:-1px}
  .p{position:absolute;left:41px;top:29px;font-size:10px;line-height:12px;color:#eee}
  .ar{position:absolute;left:60px;top:0}`,
  `<div class="pill"><div>0.2<small>K/s</small></div><div>0.2<small>K/s</small></div></div>
   <svg class="ar" width="12" height="60"><path d="M5.500 14.500l3.500 4H7v3H4v-3H2z" fill="#2f9ad8"/><path d="M5.500 44.500l3.500-4H7v-3H4v3H2z" fill="#2aa83a"/></svg>
   <svg class="c" viewBox="0 0 60 60"><defs><linearGradient id="g" x1="0" y1="0" x2="0" y2="1"><stop offset="0" stop-color="#2fd0b8"/><stop offset=".6" stop-color="#a8d860"/><stop offset="1" stop-color="#f0cc30"/></linearGradient></defs>
     <circle cx="30" cy="30" r="29.500" fill="#2a2f3c" stroke="#3c4250"/><path d="M30 3.500A26.500 26.500 0 1 1 5 39" fill="none" stroke="url(#g)" stroke-width="1.800"/></svg>
   <div class="n">71</div><div class="p">%</div>`);
def('x-side',`:host{position:absolute;right:0;top:339px;width:37px;display:flex;flex-direction:column;gap:10px;font-family:"Liberation Sans","Noto Sans CJK SC",sans-serif}
  div{height:40px;background:#ff6600;color:#fff;font-size:13.500px;line-height:18px;text-align:center;box-sizing:border-box;padding-top:2px;white-space:pre-line}
  .top{background:#c0c0c0;padding:0;display:flex;align-items:center;justify-content:center}`,
  `<div class="top"><svg width="22" height="18"><path d="M1 1.500h20" stroke="#fff" stroke-width="2"/><path d="M2 17l9-9 9 9" fill="none" stroke="#fff" stroke-width="2"/></svg></div><div>关注
我们</div><div>Q Q
咨询</div>`);
def('x-foot',`:host{display:flex;height:9px;background:#f8f8f8;overflow:hidden;font-family:"Liberation Sans","Noto Sans CJK SC",sans-serif;font-size:13px;line-height:15px;color:#3d5a80;white-space:nowrap}
  span{padding-top:6px;flex:none;display:block;color:#555}`,
  `<span style="width:888px;color:#3d5a80">工程设计模板《柱钢筋计算规则》设置问题答疑</span><span style="width:60px">◯ 收藏 (2)</span><span style="width:90px">▯ 举报问题 (1)</span><span style="width:60px">分享</span><span style="width:50px">▯ 评论</span><span>◯ 180</span>`);
def('x-page',`:host{display:grid;grid-template-rows:579px 9px;width:1226px;height:588px;position:relative;overflow:hidden}`,
  `<div></div><x-foot></x-foot><x-backdrop style="grid-row:1;bottom:auto;height:579px"></x-backdrop><x-window></x-window><x-led></x-led><x-annot></x-annot><x-close></x-close><x-meter></x-meter><x-side></x-side>`);
</script></body></html>
